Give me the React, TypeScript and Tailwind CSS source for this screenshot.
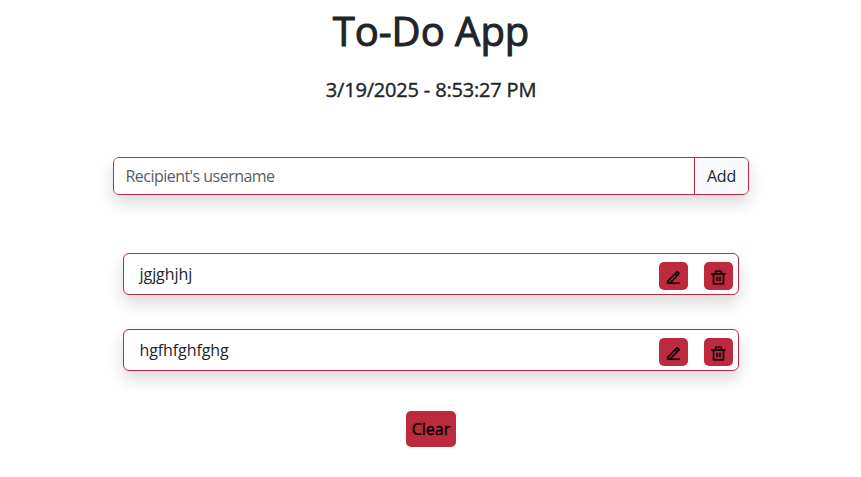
import { useState } from "react";
import { RiDeleteBinLine, RiEdit2Line } from "react-icons/ri";

const shadow = "shadow-[0_8px_16px_rgba(0,0,0,0.15)]";

function IconButton({ label, children }: { label: string; children: React.ReactNode }) {
  return (
    <button
      aria-label={label}
      className="flex h-7 w-[29px] items-start justify-center rounded-[5px] bg-[#bd2a3e] pt-[7px] text-[17px] text-black"
    >
      {children}
    </button>
  );
}

function TodoItem({ text, spacing }: { text: string; spacing: string }) {
  return (
    <li
      className={`flex h-[42px] items-center justify-between rounded-md border border-[#bd2a3e] bg-white pr-[5px] pl-4 ${shadow}`}
    >
      <span className={`text-base leading-6 ${spacing}`}>{text}</span>
      <div className="flex gap-4 pt-1">
        <IconButton label="Edit">
          <RiEdit2Line className="[stroke-width:0.3]" />
        </IconButton>
        <IconButton label="Delete">
          <RiDeleteBinLine className="[stroke-width:0.3]" />
        </IconButton>
      </div>
    </li>
  );
}

export default function App() {
  const [value, setValue] = useState("");
  const todos = [
    { text: "jgjghjhj", spacing: "tracking-[-0.05px]" },
    { text: "hgfhfghfghg", spacing: "tracking-[-0.1px]" },
  ];

  return (
    <main className="flex h-[477px] flex-col items-center overflow-hidden bg-white font-['Open_Sans','Noto_Sans',sans-serif] text-[#212529]">
      <h1 className="mt-[7px] pl-px text-[40px] leading-[48px] font-medium [-webkit-text-stroke:1px_#212529]">
        To-Do App
      </h1>
      <h2 className="mt-[23px] pl-px text-xl leading-6 font-medium tracking-[-0.18px] [-webkit-text-stroke:0.4px_#212529]">
        3/19/2025 - 8:53:27 PM
      </h2>
      <div className={`mt-[55px] flex h-[38px] w-[636px] rounded-md border border-[#bd2a3e] ${shadow}`}>
        <input
          value={value}
          onChange={(e) => setValue(e.target.value)}
          placeholder="Recipient's username"
          className="min-w-0 flex-1 rounded-l-[5px] bg-white px-3 text-base tracking-[-0.53px] outline-none placeholder:text-[#595c5f]"
        />
        <button className="w-[54px] rounded-r-[5px] border-l border-[#bd2a3e] bg-[#f8f9fa] pl-px text-base tracking-[-0.2px]">
          Add
        </button>
      </div>
      <ul className="mt-[58px] flex w-[616px] flex-col gap-[34px]">
        {todos.map((todo) => (
          <TodoItem key={todo.text} text={todo.text} spacing={todo.spacing} />
        ))}
      </ul>
      <button className="mt-10 h-9 w-[50px] rounded-[5px] bg-[#bd2a3e] pl-px text-base font-medium text-black [-webkit-text-stroke:0.4px_black]">
        Clear
      </button>
    </main>
  );
}
